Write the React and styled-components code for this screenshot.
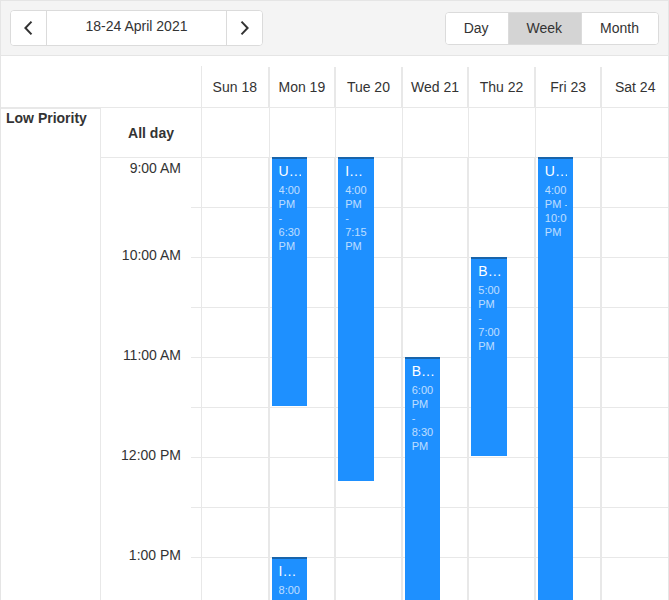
import React from "react";
import styled, { createGlobalStyle } from "styled-components";

const line = "#e8e8e8";
const edge = "#dbdbdb";

const GlobalStyle = createGlobalStyle`
  *, *::before, *::after { box-sizing: border-box; }
  body {
    margin: 0;
    background: #fff;
    color: #333;
    font: 14px/20px "Liberation Sans", Arial, sans-serif;
  }
  button { font: inherit; color: inherit; margin: 0; cursor: pointer; }
`;

const Scheduler = styled.main`
  display: flex;
  flex-direction: column;
  height: 100vh;
  overflow: hidden;
  border: 1px solid #e5e5e5;
  border-bottom: 0;
`;

const Toolbar = styled.header`
  display: flex;
  align-items: center;
  justify-content: space-between;
  flex: none;
  height: 55px;
  padding: 0 9px;
  background: #f4f4f4;
  border-bottom: 1px solid #e5e5e5;
`;

const ButtonGroup = styled.div`
  display: flex;
  height: ${(p) => p.$height}px;
  background: #fff;
  border: 1px solid ${edge};
  border-radius: 4px;
  overflow: hidden;
`;

const NavButton = styled.button`
  display: flex;
  align-items: center;
  justify-content: center;
  width: 35px;
  padding: 0;
  border: 0;
  background: #fff;
`;

const DateButton = styled.button`
  width: 181px;
  padding: 0 0 4px;
  border: solid ${edge};
  border-width: 0 1px;
  background: #fff;
`;

const ViewButton = styled.button`
  padding: 0 19px 0 18px;
  border: 0;
  background: ${(p) => (p.$active ? "#d4d4d4" : "#fff")};

  & + & { border-left: 1px solid ${edge}; }
`;

const HeaderRow = styled.div`
  display: flex;
  flex: none;
  padding-top: 10px;
  border-bottom: 1px solid ${line};
`;

const HeaderCorner = styled.div`
  flex: none;
  width: 201px;
  border-right: 1px solid ${line};
`;

const Days = styled.div`
  flex: 1;
  display: grid;
  grid-template-columns: repeat(7, minmax(0, 1fr));
`;

const DayHead = styled.div`
  margin-top: 1px;
  padding: 10px 0;
  text-align: center;
  white-space: nowrap;
  border-right: 1px solid ${line};

  & + & { border-left: 1px solid ${line}; }
  &:last-child { border-right: 0; }
`;

const Body = styled.div`
  display: flex;
  flex: 1;
  min-height: 0;
  overflow: hidden;
`;

const GroupCell = styled.div`
  flex: none;
  width: 100px;
  padding: 0 5px;
  font-weight: bold;
  line-height: 18px;
  border: solid ${line};
  border-width: 1px 1px 0 0;
`;

const GroupContent = styled.div`
  flex: 1;
  min-width: 0;
`;

const Row = styled.div`
  display: flex;
`;

const AllDayRow = styled(Row)`
  height: 50px;
  border-bottom: 1px solid ${line};
`;

const AllDayLabel = styled.div`
  display: flex;
  align-items: center;
  justify-content: center;
  flex: none;
  width: 101px;
  font-weight: bold;
  border-right: 1px solid ${line};
`;

const AllDayCell = styled.div`
  & + & { border-left: 1px solid ${line}; }
`;

const TimeLabels = styled.div`
  flex: none;
  width: 90px;
  padding-right: 10px;
  text-align: right;
`;

const TimeLabel = styled.div`
  height: 100px;
  &:first-child { height: 87px; }
`;

const Ticks = styled.div`
  flex: none;
  width: 11px;
`;

const Tick = styled.div`
  height: 50px;
  border: solid ${line};
  border-width: 0 1px 1px 0;
`;

const DayColumn = styled.div`
  display: grid;
  grid-template-columns: minmax(0, 1fr);
  grid-template-rows: repeat(${(p) => p.$quarters}, 25px);
  border-right: 1px solid ${line};

  & + & { border-left: 1px solid ${line}; }
  &:last-child { border-right: 0; }
`;

const Slot = styled.div`
  grid-column: 1;
  grid-row: ${(p) => p.$start} / span 2;
  border-bottom: 1px solid ${line};
`;

const EventCard = styled.article`
  grid-column: 1;
  grid-row: ${(p) => p.$start} / span ${(p) => p.$length};
  margin: -1px 27px 2px 2px;
  padding: 2px 6px 2px 7px;
  overflow: hidden;
  color: #fff;
  background: #1e90ff;
  border-top: 2px solid #1864ab;
`;

const EventTitle = styled.div`
  overflow: hidden;
  text-overflow: ellipsis;
  white-space: nowrap;
`;

const EventTime = styled.div`
  margin-top: 2px;
  overflow: hidden;
  font-size: 11px;
  line-height: 14px;
  opacity: 0.7;
`;

const Chevron = ({ d }) => (
  <svg width="17" height="18" viewBox="0 0 17 18" fill="none" stroke="#333" strokeWidth="2" aria-hidden="true">
    <path d={d} />
  </svg>
);

const HOURS = ["9:00 AM", "10:00 AM", "11:00 AM", "12:00 PM", "1:00 PM", "2:00 PM", "3:00 PM"];
const QUARTERS = HOURS.length * 4;
const SLOTS = Array.from({ length: HOURS.length * 2 }, (_, i) => i * 2 + 1);

const DAYS = [
  { name: "Sun 18", events: [] },
  {
    name: "Mon 19",
    events: [
      { title: "Upgrade", time: "4:00 PM - 6:30 PM", start: 1, length: 10 },
      { title: "Install", time: "8:00 PM - 9:30 PM", start: 17, length: 6 },
    ],
  },
  { name: "Tue 20", events: [{ title: "Install", time: "4:00 PM - 7:15 PM", start: 1, length: 13 }] },
  { name: "Wed 21", events: [{ title: "Book", time: "6:00 PM - 8:30 PM", start: 9, length: 10 }] },
  { name: "Thu 22", events: [{ title: "Book", time: "5:00 PM - 7:00 PM", start: 5, length: 8 }] },
  { name: "Fri 23", events: [{ title: "Upgrade", time: "4:00 PM\u00a0- 10:00 PM", start: 1, length: 24 }] },
  { name: "Sat 24", events: [] },
];

export default function App() {
  const [view, setView] = React.useState("Week");
  return (
    <>
      <GlobalStyle />
      <Scheduler>
        <Toolbar>
          <ButtonGroup $height={36}>
            <NavButton aria-label="Previous week">
              <Chevron d="M11.5 2.6 5.4 9l6.1 6.4" />
            </NavButton>
            <DateButton>18-24 April 2021</DateButton>
            <NavButton aria-label="Next week">
              <Chevron d="M5.5 2.6 11.6 9l-6.1 6.4" />
            </NavButton>
          </ButtonGroup>
          <ButtonGroup $height={33}>
            {["Day", "Week", "Month"].map((name) => (
              <ViewButton key={name} $active={view === name} aria-pressed={view === name} onClick={() => setView(name)}>
                {name}
              </ViewButton>
            ))}
          </ButtonGroup>
        </Toolbar>
        <HeaderRow>
          <HeaderCorner />
          <Days>
            {DAYS.map((day) => (
              <DayHead key={day.name}>{day.name}</DayHead>
            ))}
          </Days>
        </HeaderRow>
        <Body>
          <GroupCell>Low Priority</GroupCell>
          <GroupContent>
            <AllDayRow>
              <AllDayLabel>All day</AllDayLabel>
              <Days>
                {DAYS.map((day) => (
                  <AllDayCell key={day.name} />
                ))}
              </Days>
            </AllDayRow>
            <Row>
              <TimeLabels>
                {HOURS.map((hour) => (
                  <TimeLabel key={hour}>{hour}</TimeLabel>
                ))}
              </TimeLabels>
              <Ticks>
                {SLOTS.map((slot) => (
                  <Tick key={slot} />
                ))}
              </Ticks>
              <Days>
                {DAYS.map((day) => (
                  <DayColumn key={day.name} $quarters={QUARTERS}>
                    {SLOTS.map((slot) => (
                      <Slot key={slot} $start={slot} />
                    ))}
                    {day.events.map((event) => (
                      <EventCard key={event.start} $start={event.start} $length={event.length}>
                        <EventTitle>{event.title}</EventTitle>
                        <EventTime>{event.time}</EventTime>
                      </EventCard>
                    ))}
                  </DayColumn>
                ))}
              </Days>
            </Row>
          </GroupContent>
        </Body>
      </Scheduler>
    </>
  );
}
